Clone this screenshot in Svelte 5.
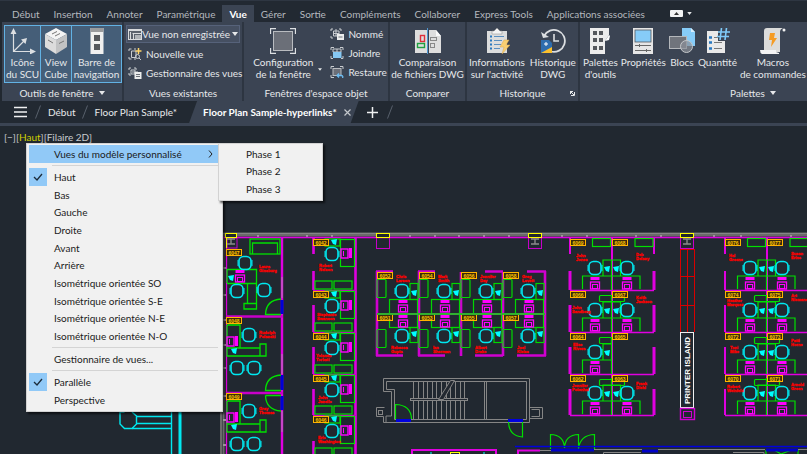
<script lang="ts">
  // Ruban "Vue", onglets de fichiers et zone de dessin avec le menu des vues.
  const tabs = [
    "Début", "Insertion", "Annoter", "Paramétrique", "Vue", "Gérer", "Sortie",
    "Compléments", "Collaborer", "Express Tools", "Applications associées",
  ];
  const views = [
    "Haut", "Bas", "Gauche", "Droite", "Avant", "Arrière",
    "Isométrique orientée SO", "Isométrique orientée S-E",
    "Isométrique orientée N-E", "Isométrique orientée N-O",
  ];
  const phases = ["Phase 1", "Phase 2", "Phase 3"];

  let activeTab = $state("Vue");
  let view = $state("Haut");
  let projection = $state("Parallèle");

  // Plan: bureaux fermés à gauche
  const offices = [
    { y: 317, no: "6048", name: ["Rudolph", "Polanski"] },
    { y: 393, no: "6049", name: ["Gray", "Thomas"] },
  ];
  const booths = [
    { y: 238, b: 290, no: "6042", name: ["Robert", "Nelson"], nx: 319, ny: 267 },
    { y: 290, b: 332, no: "6043", name: ["Stephanie", "Swanson"], nx: 317, ny: 316 },
    { y: 332, b: 374, no: "6044", name: ["Yolanda", "Torbati"], nx: 316, ny: 357 },
    { y: 374, b: 415, no: "6045", name: ["John", "Janello"], nx: 318, ny: 399 },
    { y: 415, b: 457, no: "6046", name: ["Eric", "Washington"], nx: 318, ny: 439 },
  ];
  // Îlot central: une colonne par poste, rangée haute et basse
  const pods = [
    { x: 377, a: "6052", b: "6051", top: ["Chris", "Larson"], bot: ["Rebecca", "Gupta"] },
    { x: 419, a: "6054", b: "6053", top: ["Mark", "Smith"], bot: ["Ian", "Sherman"] },
    { x: 461, a: "6056", b: "6055", top: ["Jennifer", "Day"], bot: ["Albert", "Drake"] },
    { x: 503, a: "6058", b: "6057", top: ["Greg", "Lovett"], bot: ["Joel", "Kleiss"] },
  ];
  const blocks = [
    {
      x: 570,
      w: 3,
      rows: [
        { y: 238, b: 290, nos: ["6069", "6068"], l: ["John", "Jones"], r: ["Deb", "Delany"], ly: 257, ry: 256, lx: 6 },
        { y: 290, b: 332, nos: ["6066", "6067"], l: ["John", "Sandberg"], r: ["Keith", "Jackson"], ly: 309, ry: 299, lx: 2 },
        { y: 332, b: 374, nos: ["6064", "6065"], l: ["Elise", "Rivera"], r: [], ly: 346, ry: 346, lx: 3 },
        { y: 374, b: 415, nos: ["6062", "6063"], l: ["Jennifer", "Potenhal"], r: ["Frank", "Diehl"], ly: 387, ry: 385, lx: 2 },
      ],
    },
    {
      x: 725,
      w: 2,
      rows: [
        { y: 238, b: 290, nos: ["6076", "6077"], l: ["Hal", "Greene"], r: ["Susan", "Erins"], ly: 257, ry: 255, lx: 4 },
        { y: 290, b: 332, nos: ["6074", "6075"], l: ["Heather", "Marquez"], r: ["Art", "Niemand"], ly: 302, ry: 297, lx: 2 },
        { y: 332, b: 374, nos: ["6072", "6073"], l: ["Toni", "Mike"], r: ["Patti", "Horne"], ly: 349, ry: 342, lx: 5 },
        { y: 374, b: 415, nos: ["6070", "6071"], l: ["Robert", "Weinfeld"], r: ["Arnold", "Green"], ly: 388, ry: 386, lx: 2 },
      ],
    },
  ];
  const stairs = [413, 418, 423, 427, 432, 436, 441, 446, 450, 455, 460, 464];
  const mullions = [257, 306, 331, 409, 434, 458, 483, 508, 561, 586, 635, 660, 713, 740, 790];
</script>

{#snippet arrow()}
  <svg class="arrow" viewBox="0 0 6 4" aria-hidden="true"><path d="M0 0H6L3 4Z" fill="currentColor" /></svg>
{/snippet}

{#snippet tick()}
  <svg class="tick" viewBox="0 0 10 8" aria-hidden="true"><path d="M1 4L4 7L9 1" fill="none" stroke="#1c2b3a" stroke-width="1.3" /></svg>
{/snippet}

<div class="app">
  <nav class="tabs">
    {#each tabs as t}
      <button class="tab" class:active={t === activeTab} onclick={() => (activeTab = t)}>{t}</button>
    {/each}
    <button class="minimize" aria-label="Réduire le ruban">
      <svg width="13" height="7" viewBox="0 0 13 7"><rect width="13" height="7" rx="1" fill="#f2f3f4" /><path d="M4 5L6.500 2L9 5Z" fill="#333" /></svg>
      <svg width="5" height="3" viewBox="0 0 6 4"><path d="M0 0H6L3 4Z" fill="#e6e8ea" /></svg>
    </button>
  </nav>

  <div class="ribbon">
    <section class="panel tools">
      <div class="body toggles">
        <button class="big on">
          <svg class="icon" viewBox="0 0 26 26"><g stroke="#dcdfe2" stroke-width="1.2" fill="none"><path d="M3.500 4V23.500H22M3.500 23.500L14 13" /></g><path d="M3.500 0L6.500 6H0.500ZM26 23.500L20 20.500V26.500ZM17 10L15.500 16L11 11.500Z" fill="#dcdfe2" /></svg>
          <span>Icône<br />du SCU</span>
        </button>
        <button class="big on">
          <svg class="icon" viewBox="0 0 26 26"><path d="M13 0L24 6L13 12L2 6Z" fill="#f4f4f4" /><path d="M2 6L13 12V26L2 19Z" fill="#dcdcdc" /><path d="M24 6L13 12V26L24 19Z" fill="#c2c3c4" /><path d="M9 6L14 3.500M12 8L17 5.500M5 12L10 15M16 15.500L21 13" stroke="#777" stroke-width="1" /></svg>
          <span>View<br />Cube</span>
        </button>
        <button class="big on">
          <svg class="icon" viewBox="0 0 26 26"><rect x="6.500" width="13" height="26" fill="#f0f0ef" /><rect x="6.500" width="13" height="4" fill="#9a9b9d" /><rect x="10" y="7" width="6" height="6" fill="#55585c" /><rect x="10" y="16" width="6" height="6" fill="#55585c" /></svg>
          <span>Barre de<br />navigation</span>
        </button>
      </div>
      <h2>Outils de fenêtre {@render arrow()}</h2>
    </section>

    <section class="panel views">
      <div class="body rows">
        <label class="combo">
          <svg class="small" viewBox="0 0 14 12"><rect x="0.500" y="1.500" width="13" height="10" fill="#5a616b" stroke="#d8dadc" /><rect x="1" y="1" width="12" height="2" fill="#d8dadc" /><path d="M2.500 4V11M4.500 5.500H13M5.500 5.500V11" stroke="#d8dadc" /><rect x="7" y="7" width="6" height="4" fill="#aeb2b6" /></svg>
          <select aria-label="Vue"><option>Vue non enregistrée</option></select>
          {@render arrow()}
        </label>
        <button class="row">
          <svg class="small" viewBox="0 0 14 12"><path d="M3.500 1H1V3M1 9V11H3.500M8 1H6M8 11H6M3.500 3V9.500H8V3H3.500" fill="none" stroke="#c9ccd0" /><circle cx="9.500" cy="8.500" r="2" fill="none" stroke="#c9ccd0" /><path d="M11 10L13 12" stroke="#c9ccd0" /><path d="M10.500 0V6M7.500 3H13.500" stroke="#ffd56a" stroke-width="1.5" /></svg>
          Nouvelle vue
        </button>
        <button class="row">
          <svg class="small" viewBox="0 0 14 12"><path d="M3 1H1V3M6 1H8V3M1 6V8H3M3 3H7V7H3ZM4 5H10V8" fill="none" stroke="#c9ccd0" /><rect x="6.500" y="5" width="7" height="7" fill="#eceded" /><path d="M8 7.500H12M8 9.500H12" stroke="#6b7078" /></svg>
          Gestionnaire des vues
        </button>
      </div>
      <h2>Vues existantes</h2>
    </section>

    <section class="panel ports">
      <div class="body split">
        <button class="big">
          <svg class="icon" viewBox="0 0 26 26"><rect x="3.500" y="3.500" width="19" height="19" fill="#6b6f78" stroke="#b9bcc0" /><path d="M6 0.500H0.500V6M20 0.500H25.500V6M0.500 20V25.500H6M25.500 20V25.500H20" fill="none" stroke="#dcdfe2" stroke-width="1.300" /></svg>
          <span>Configuration<br />de la fenêtre</span>
        </button>
        <svg class="drop" viewBox="0 0 6 4"><path d="M0 0H6L3 4Z" fill="#e6e8ea" /></svg>
        <div class="rows">
          <button class="row">
            <svg class="small" viewBox="0 0 14 12"><path d="M3 1H1V3M9 1H11V3M1 8V10H3M3.500 3H9V8H3.500ZM6 1V8M3 5.500H9" fill="none" stroke="#c9ccd0" /><rect x="7" y="6" width="7" height="6" fill="#eceded" /><path d="M8.500 9H12.500" stroke="#6b7078" /></svg>
            Nommé
          </button>
          <button class="row">
            <svg class="small" viewBox="0 0 14 12"><path d="M4 0.500H1V3M10 0.500H13V3M1 9V11.500H3M13 9V11.500H11" fill="none" stroke="#c9ccd0" /><path d="M3 2H11V5H3ZM7 2V5" fill="none" stroke="#c9ccd0" /><rect x="3" y="5" width="8.500" height="6" fill="#86c8f4" /></svg>
            Joindre
          </button>
          <button class="row">
            <svg class="small" viewBox="0 0 14 12"><path d="M4 0.500H1V3M10 0.500H13V3M1 9V11.500H4" fill="none" stroke="#c9ccd0" /><rect x="3" y="2.500" width="8" height="7" fill="#6b6f78" stroke="#b9bcc0" /><path d="M7 9.500H11.500Q13.500 10 12.500 12M9 7.500L7 9.500L9 11.500" fill="none" stroke="#6dbdf2" stroke-width="1.300" /></svg>
            Restaure
          </button>
        </div>
      </div>
      <h2>Fenêtres d'espace objet</h2>
    </section>

    <section class="panel compare">
      <div class="body centered">
        <button class="big">
          <svg class="icon" viewBox="0 0 26 26"><path d="M0 2H12V25H0ZM14 2H21L26 8V25H14Z" fill="#dedede" /><path d="M21 2V8H26Z" fill="#fafafa" /><path d="M12.500 0V26" stroke="#4f97d0" /><rect x="5.500" y="7.500" width="4" height="6" fill="none" stroke="#e0303c" stroke-width="1.400" /><rect x="2.500" y="15.500" width="7" height="4" fill="none" stroke="#20a040" stroke-width="1.400" /><rect x="15.500" y="9.500" width="6" height="3" fill="none" stroke="#888" /><rect x="15.500" y="15.500" width="4" height="4" fill="none" stroke="#888" /></svg>
          <span>Comparaison<br />de fichiers DWG</span>
        </button>
      </div>
      <h2>Comparer</h2>
    </section>

    <section class="panel history">
      <div class="body split">
        <button class="big">
          <svg class="icon" viewBox="0 0 26 26"><rect x="3" y="3" width="20" height="22" fill="#dcdddd" /><path d="M8 3H10L13 0L16 3H18V6H8Z" fill="#f4f4f4" stroke="#888" stroke-width="0.500" /><path d="M6 8.500H8M6 12.500H8M6 16.500H8M6 20.500H8" stroke="#2878c0" stroke-width="2" /><path d="M10 8.500H20M10 12.500H18M10 16.500H17M10 20.500H16" stroke="#5a8fc0" /><path d="M20 12L16 19H20L18 26L26 17H22L25 12Z" fill="#f8cf72" stroke="#dca94a" stroke-width="0.500" /></svg>
          <span>Informations<br />sur l'activité</span>
        </button>
        <button class="big">
          <svg class="icon" viewBox="0 0 26 26"><path d="M4 8A11 11 0 1 1 11 23.500" fill="none" stroke="#dcdfe2" stroke-width="1.800" /><path d="M1 4L3 10L9 9Z" fill="#dcdfe2" /><path d="M14 6V13H19" fill="none" stroke="#dcdfe2" stroke-width="1.600" /><path d="M1 12H9L12 15V25H1Z" fill="#2e6dae" /><path d="M1 25L12 19V25Z" fill="#fbc02d" /><path d="M4 16H8M6 14V18" stroke="#fff" /></svg>
          <span>Historique<br />DWG</span>
        </button>
      </div>
      <h2>Historique</h2>
      <button class="launcher" aria-label="Options d'historique">
        <svg width="5" height="5" viewBox="0 0 5 5"><path d="M0 0.500H3M0.500 0V3M1 1L4 4M4.500 1V4.500H1" fill="none" stroke="#e6e8ea" /></svg>
      </button>
    </section>

    <section class="panel palettes">
      <div class="body palette-list">
        <button class="big">
          <svg class="icon" viewBox="0 0 26 26"><path d="M3 0H22V7L18 13V26H3Z" fill="#ececec" /><path d="M22 7L18 13L22 12L23 8Z" fill="#fff" /><path d="M6 3H10V7H6ZM12 3H16V7H12ZM6 10H10V14H6ZM12 10H16V14H12ZM6 18H10V22H6ZM12 18H16V22H12Z" fill="#54575c" /></svg>
          <span>Palettes<br />d'outils</span>
        </button>
        <button class="big">
          <svg class="icon" viewBox="0 0 26 26"><rect x="3" width="20" height="26" fill="#e6e6e6" /><rect x="5" y="2" width="16" height="12" fill="#86ccf8" stroke="#555a60" stroke-width="0.800" /><path d="M5 17.500H21M5 22.500H21M9.500 16V19M16.500 21V24" stroke="#666" /></svg>
          <span>Propriétés</span>
        </button>
        <button class="big">
          <svg class="icon" viewBox="0 0 26 26"><path d="M13 0H22L26 4V18H13Z" fill="#86ccf8" /><path d="M22 0V4H26Z" fill="#d8effd" /><rect x="0.500" y="8.500" width="17" height="12" fill="#70747c" stroke="#b4b7bb" /><circle cx="17.500" cy="18.500" r="6" fill="#8b9098" fill-opacity="0.700" stroke="#c4c7ca" /></svg>
          <span>Blocs</span>
        </button>
        <button class="big">
          <svg class="icon" viewBox="0 0 26 26"><path d="M3 3H21V25H3Z" fill="#e9e9e9" /><path d="M5 9.500H8M5 14.500H8M5 20.500H8" stroke="#2878c0" stroke-width="2.500" /><path d="M10 9.500H15M10 14.500H18M10 20.500H18" stroke="#777" /><path d="M14 0H26V13H14Z" fill="#3b4453" /><path d="M17.500 0L16 12M22.500 0L21 12M14 4H26M13 8.500H25" stroke="#7fcaf8" stroke-width="1.600" /></svg>
          <span>Quantité</span>
        </button>
        <button class="big">
          <svg class="icon" viewBox="0 0 26 26"><path d="M4 3Q4 0 7 0H23Q20 1 20 4V24H6V22H4Z" fill="#dcdcdb" /><path d="M0 22H16V24L19 25V26H2Q0 25 0 22Z" fill="#f3f3f3" /><circle cx="24" cy="2" r="1.500" fill="#f3f3f3" /><path d="M10 5H15L14 10H17L11 19L12 12H9Z" fill="#f59b23" /></svg>
          <span>Macros<br />de commandes</span>
        </button>
      </div>
      <h2>Palettes {@render arrow()}</h2>
    </section>
  </div>

  <div class="files">
    <button class="burger" aria-label="Menu des fichiers">
      <svg width="13" height="12" viewBox="0 0 13 12"><path d="M0 1.500H13M0 6H13M0 10.500H13" stroke="#f0f1f2" stroke-width="1.500" /></svg>
    </button>
    <svg class="slash" viewBox="0 0 6 14"><path d="M0.500 13.500L5.500 0.500" stroke="#59616d" /></svg>
    <button class="file">Début</button>
    <svg class="slash" viewBox="0 0 6 14"><path d="M0.500 13.500L5.500 0.500" stroke="#59616d" /></svg>
    <button class="file">Floor Plan Sample*</button>
    <div class="current">
      <button class="file">Floor Plan Sample-hyperlinks*</button>
      <button class="close" aria-label="Fermer">
        <svg width="7" height="7" viewBox="0 0 7 7"><path d="M0.500 0.500L6.500 6.500M6.500 0.500L0.500 6.500" stroke="#c4c8cd" stroke-width="1.200" /></svg>
      </button>
    </div>
    <button class="plus" aria-label="Nouveau dessin">
      <svg width="11" height="11" viewBox="0 0 11 11"><path d="M5.500 0V11M0 5.500H11" stroke="#f0f1f2" stroke-width="1.500" /></svg>
    </button>
    <svg class="slash" viewBox="0 0 6 14"><path d="M0.500 13.500L5.500 0.500" stroke="#59616d" /></svg>
  </div>

  <main class="canvas">
    <svg class="plan" viewBox="0 126 807 328" preserveAspectRatio="xMinYMin slice" role="img" aria-label="Plan d'étage">
      {#snippet chair(x: number, y: number)}
        <rect x={x - 6} y={y - 6.5} width="12" height="13" rx="4.5" fill="none" stroke="#00e8f0" stroke-width="1.6" />
        <path d={`M${x - 7} ${y - 3}V${y + 3}M${x + 7} ${y - 3}V${y + 3}`} stroke="#00e8f0" />
      {/snippet}
      {#snippet pc(x: number, y: number)}
        <rect x={x - 4.5} y={y - 1} width="9" height="7" fill="none" stroke="#ff00ff" stroke-width="1.3" />
        <rect x={x - 2.5} y={y + 1.5} width="5" height="4" fill="none" stroke="#ff00ff" />
        <rect x={x - 4.5} y={y - 6} width="9" height="3" fill="#ff00ff" />
      {/snippet}
      {#snippet pcSide(x: number, y: number)}
        <rect x={x - 6} y={y - 4} width="7" height="9" fill="none" stroke="#ff00ff" stroke-width="1.4" />
        <rect x={x + 2} y={y - 5} width="3" height="10" fill="#ff00ff" />
        <path d={`M${x - 3.5} ${y - 2}V${y + 3}`} stroke="#ff00ff" />
      {/snippet}
      {#snippet phone(x: number, y: number)}
        <path d={`M${x - 3} ${y - 2}L${x + 3} ${y - 3}L${x + 2} ${y + 3}L${x - 1} ${y + 2}Z`} fill="#00ffff" />
      {/snippet}
      {#snippet badge(x: number, y: number, no: string)}
        <rect x={x + 0.5} y={y + 0.5} width="15" height="6" fill="#3a2c08" stroke="#ffb400" />
        <text class="no" x={x + 8} y={y + 5.5} text-anchor="middle">{no}</text>
      {/snippet}
      {#snippet who(x: number, y: number, name: string[])}
        {#each name as part, i}
          <text class="who" {x} y={y + i * 4}>{part}</text>
        {/each}
      {/snippet}
      {#snippet column(x: number)}
        <rect x={x + 0.5} y="237.5" width="13" height="11" fill="none" stroke="#c800c8" />
        <rect x={x + 0.5} y="233.5" width="13" height="4" fill="#20262e" stroke="#ffff00" />
      {/snippet}
      {#snippet beam(x: number)}
        <path d={`M${x - 4} 239H${x + 4}M${x} 239V244M${x - 4} 244H${x + 4}`} stroke="#8a8a8a" stroke-width="1.4" />
      {/snippet}

      <!-- façade -->
      <path d="M223 234.5H807" stroke="#6a6a6a" stroke-width="4" />
      <path d="M223 233.5H807" stroke="#858585" stroke-width="1" />
      <path d="M223.500 236V454M221 412V454" stroke="#6a6a6a" stroke-width="2" />
      {#each mullions as x}<rect {x} y="235" width="2" height="3" fill="#999" />{/each}
      {#each [267, 294, 319, 344, 367, 395, 419, 444] as y}<rect x="223" {y} width="3" height="2" fill="#999" />{/each}
      <path d="M223 237.500H807M226.500 237V454" stroke="#e000e0" stroke-width="1.300" />

      <!-- bureaux -->
      <path d="M282 237V454" stroke="#e000e0" stroke-width="2.400" />
      <path d="M282 277V298M282 354V374M282 411V432" stroke="#b088b0" />
      <path d="M226 316.500H283M226 393H283" stroke="#c800c8" stroke-width="2.600" />
      <path d="M282 300V314M282 375V390M282 396V410" stroke="#0000d8" stroke-width="3" />
      <g fill="none" stroke="#00e000" stroke-width="1.300">
        <rect x="250" y="239" width="30" height="15" /><path d="M252.500 254V243H277.500V254" />
        <path d="M227 269.500H256.500V309H244V303.500H256M227 283.500H256M247.500 283V303M227 269V283" />
        <path d="M281 299Q266 300 265.500 314.500H281M281 375Q266 376 265.500 390.500H281M265.500 395.500H281M265.500 395.500Q266 410 281 411" />
      </g>
      <rect x="227" y="238" width="10" height="10" fill="none" stroke="#c800c8" />
      <rect x="225.500" y="233.500" width="11" height="4" fill="#20262e" stroke="#ffff00" />
      <path d="M226.500 238V248" stroke="#ffff00" />
      {@render beam(231)}
      {@render badge(226, 249, "6047")}
      {@render chair(245, 263)}{@render chair(237, 291)}{@render chair(264, 290)}
      {@render pc(240, 276)}{@render phone(231, 278)}
      {@render who(259, 268, ["Laura", "Ginsburg"])}
      {#each offices as o}
        {@render badge(226, o.y, o.no)}
        <path d={`M227 ${o.y + 8}H240V${o.y + 31}M227 ${o.y + 8}V${o.y + 39}H266V${o.y + 27}H260V${o.y + 39}M227 ${o.y + 31}H260`} fill="none" stroke="#00e000" stroke-width="1.300" />
        {@render pcSide(233, o.y + 24)}{@render phone(234, o.y + 34)}
        {@render chair(249, o.y + 18)}{@render chair(237, o.y + 51)}{@render chair(254, o.y + 51)}
        {@render who(259, o.y + 17, o.name)}
      {/each}

      <!-- postes le long du couloir -->
      <path d="M355.500 237V454" stroke="#e000e0" stroke-width="2.600" />
      <path d="M313.500 238V254M313.500 271V290M313.500 305V332M313.500 347V374M313.500 389V415M313.500 441V454" stroke="#e000e0" stroke-width="2.600" />
      {#each booths as c}
        <path d={`M313 ${c.b}.5H356`} stroke="#c800c8" stroke-width="1.500" />
        <g fill="none" stroke="#00e000" stroke-width="1.200">
          <rect x="325" y={c.y + 1} width="15" height="7" />
          <rect x="340.500" y={c.y + 1.5} width="14" height="27" />
          <rect x="315" y={c.b - 9} width="17" height="8" />
          <rect x="334" y={c.b - 9} width="18" height="8" />
        </g>
        {@render badge(313, c.y + 1, c.no)}
        {@render phone(334, c.y + 4)}{@render chair(332, c.y + 16)}{@render pcSide(347, c.y + 15)}
        {@render who(c.nx, c.ny, c.name)}
      {/each}

      <!-- îlot central -->
      {@render column(376)}{@render column(528)}{@render beam(535)}
      <g stroke="#d000d0" stroke-width="2.600">
        <path d="M377 271V356M419 271V356M461 272V356M503 272V356M545 271V356" />
        <path d="M376 271.500H393M418 271.500H435M485 271.500H503M527 271.500H546M376 355.500H403M418 355.500H445M475 355.500H503M517 355.500H546" />
      </g>
      {#each pods as p}
        <g fill="none" stroke="#00d800" stroke-width="1.200">
          <rect x={p.x} y="279.500" width="9" height="18" rx="1" />
          <rect x={p.x} y="329.500" width="9" height="18" rx="1" />
          <rect x={p.x + 33} y="283.500" width="8" height="16" />
          <rect x={p.x + 33} y="327.500" width="8" height="15" />
          <rect x={p.x + 12.500} y="299.500" width="28" height="28" />
        </g>
        {@render badge(p.x, 272, p.a)}{@render badge(p.x, 314, p.b)}
        {@render chair(p.x + 25, 291)}{@render chair(p.x + 25, 336)}
        {@render phone(p.x + 37, 293)}{@render phone(p.x + 37, 334)}
        {@render pc(p.x + 26, 306)}{@render pc(p.x + 26, 321)}
        {@render who(p.x + 19, 278, p.top)}{@render who(p.x + 14, 349, p.bot)}
      {/each}
      <path d="M377 314H545" stroke="#30b030" stroke-width="2.200" />

      <!-- blocs de droite -->
      {#each blocks as k}
        {#each k.rows as r, i}
          <path d={`M${k.x} ${r.b}.500H${k.x + 84}`} stroke="#e000e0" stroke-width="1.600" />
          <path d={`M${k.x} ${r.b}V${i ? r.y + 15 : 271}M${k.x + 84} ${r.b}V${i ? r.y + 15 : 271}`} stroke="#e000e0" stroke-width={k.w} />
          {#if i === 0}<path d={`M${k.x} 238V254M${k.x + 84} 238V254`} stroke="#e000e0" stroke-width="2" />{/if}
          <path d={`M${k.x + 42} ${r.y}V${r.b}`} stroke="#e000e0" stroke-width="2" />
          <g fill="none" stroke="#00e000" stroke-width="1.200">
            <path d={`M${k.x + 33} ${r.b - 14}V${r.b - 30}H${k.x + 42}M${k.x + 12.500} ${r.b - 1}V${r.b - 14}H${k.x + 42}`} />
            <path d={`M${k.x + 41.500} ${r.b - 52 + (i ? 15 : 22)}V${r.b}`} />
            {#if r.r.length}
              <path d={`M${k.x + 42} ${r.b - 30}H${k.x + 50.500}V${r.b - 14}M${k.x + 42} ${r.b - 14}H${k.x + 70}V${r.b - 1}`} />
            {/if}
            {#if i === 0}
              <rect x={k.x + 22.500} y="238.500" width="18" height="8" />
              <rect x={k.x + 65} y="238.500" width="18" height="8" />
            {:else}
              <rect x={k.x + 29.500} y={r.y + 5.500} width={r.r.length ? 25 : 12} height="6" rx="1" />
            {/if}
          </g>
          {@render badge(k.x, r.y + 1, r.nos[0])}{@render badge(k.x + 42, r.y + 1, r.nos[1])}
          {@render chair(k.x + 25, r.b - 22)}{@render phone(k.x + 37, r.b - 21)}{@render pc(k.x + 25, r.b - 7)}
          {#if r.r.length}
            {@render chair(k.x + 57, r.b - 22)}{@render phone(k.x + 46, r.b - 21)}{@render pc(k.x + 57, r.b - 7)}
          {/if}
          {@render who(k.x + r.lx, r.ly, r.l)}{@render who(k.x + 66, r.ry, r.r)}
        {/each}
      {/each}

      <!-- îlot d'impression -->
      {@render column(680)}{@render beam(687)}
      <path d="M680.500 249V332M687.500 249V332M694.500 249V332M680 249.500H695M680 276.500H695M680 305.500H695" fill="none" stroke="#d80000" />
      <rect x="680.500" y="332.500" width="13" height="75" fill="none" stroke="#f0f0f0" />
      <text class="printer" transform="translate(690 404) rotate(-90)">PRINTER ISLAND</text>
      <rect x="680.500" y="408.500" width="14" height="11" fill="none" stroke="#d000d0" stroke-width="1.400" />
      <rect x="683.500" y="411.500" width="8" height="6" fill="none" stroke="#d000d0" />

      <!-- escalier -->
      <g fill="none" stroke="#858585" stroke-width="1">
        <path d="M383.500 378.500H529.500V422.500H383.500V416.500H376.500V407.500H384.500M383.500 378.500V391.500H391.500V416H386V422" />
        <path d="M386.500 381.500H526.500V419.500H394.500V389.500H386.500ZM484.500 381V419M486.500 381V419" />
        <rect x="378.500" y="410.500" width="4" height="4" />
        <path d="M529 407.500H542.500V418.500H529M531.500 409.500H539.500V416.500H531.500" />
        {#each stairs as x}<path d={`M${x}.5 382V399M${x}.5 401V419`} />{/each}
        <rect x="410.500" y="398.500" width="57" height="2" fill="#222830" />
        <path d="M438.500 399.500L450.500 380.500H454.500L443.500 399.500Z" fill="#222830" />
      </g>
      <path d="M396 420.500H411M508 420.500H523" stroke="#0000e0" stroke-width="3" />
      <g fill="none" stroke="#00e000" stroke-width="1.200">
        <path d="M395.500 419V404.500Q411 405 411.500 419" />
        <path d="M522.500 422V437Q509 436 508.500 422" />
        <path d="M550.500 449V434.500Q564 435 564.500 448Q565 435 578.500 434.500V449Q580 435 594.500 434.500V449" />
        <path d="M766 454V450.500H775L781 454L790 450.500H798V454" />
      </g>
      <path d="M515 446.500H807" stroke="#0000e0" stroke-width="1.400" />
      <path d="M551 450H594M642 451H658M766 450H798" stroke="#0000c8" stroke-width="3" />
      <path d="M412 454V450H496V454M518 454V450.500H540" fill="none" stroke="#e000e0" stroke-width="2" />
      <rect x="450.500" y="452.500" width="9" height="4" fill="none" stroke="#ffff00" />
      <path d="M431 452V454M484 452V454" stroke="#00ffff" />
      <path d="M540 450.500H551M594 449.500H642M658 449.500H765M603.500 454V452.500H641M733 452.500H764V454M798 449.500H807" fill="none" stroke="#858585" />

      <!-- mobilier à gauche -->
      <g fill="none" stroke="#00e8f0" stroke-width="1.400">
        <path d="M124.500 412H120V424L124.500 428.500H132L136.500 424V416L132 412" />
        <path d="M136 416.500H171M136 423.500H171M132 428.500H171M171.500 412V454" />
        <path d="M180 412V454" stroke-width="3" />
      </g>
    </svg>

    <div class="controls">
      <button>[−]</button><button class="hot">[<em>Haut</em>]</button><button>[Filaire 2D]</button>
    </div>

    <div class="menu" role="menu">
      <button class="item open" role="menuitem">
        <span></span>Vues du modèle personnalisé
        <svg class="chevron" viewBox="0 0 5 8"><path d="M1 0.500L4 4L1 7.500" fill="none" stroke="#222" /></svg>
      </button>
      <hr />
      <div class="list">
        {#each views as v}
          <button class="item" role="menuitemradio" aria-checked={v === view} onclick={() => (view = v)}>
            <span class:checked={v === view}>{#if v === view}{@render tick()}{/if}</span>{v}
          </button>
        {/each}
      </div>
      <hr />
      <button class="item" role="menuitem"><span></span>Gestionnaire de vues...</button>
      <hr />
      {#each ["Parallèle", "Perspective"] as p}
        <button class="item" role="menuitemradio" aria-checked={p === projection} onclick={() => (projection = p)}>
          <span class:checked={p === projection}>{#if p === projection}{@render tick()}{/if}</span>{p}
        </button>
      {/each}
    </div>

    <div class="menu sub" role="menu">
      <div class="list short">
        {#each phases as p}
          <button class="item" role="menuitem"><span></span>{p}</button>
        {/each}
      </div>
    </div>
  </main>
</div>

<style>
  :global(body) {
    background: #212830;
  }
  .app {
    font-family: Lato, "Open Sans", sans-serif;
    font-size: 10px;
    line-height: 12px;
    color: #e6e8ea;
    min-height: 100vh;
    display: flex;
    flex-direction: column;
    overflow: hidden;
  }
  button,
  select {
    font: inherit;
    color: inherit;
    background: none;
    border: 0;
    margin: 0;
    padding: 0;
    white-space: nowrap;
    text-align: left;
  }
  svg {
    display: block;
    flex: none;
  }
  .tabs {
    display: flex;
    height: 17px;
    padding: 4px 5px 0;
    border-top: 1px solid #2e3642;
    background: #222932;
  }
  .tab {
    padding: 0 7px;
    color: #b4b8be;
  }
  .tab.active {
    background: #3b4453;
    color: #fff;
    font-weight: bold;
  }
  .minimize {
    display: flex;
    align-items: center;
    gap: 4px;
    margin-left: 18px;
  }
  .ribbon {
    display: flex;
    height: 79px;
    margin-left: 2px;
    background: #3b4453;
    overflow: hidden;
  }
  .panel {
    position: relative;
    box-sizing: border-box;
    flex: none;
    display: flex;
    flex-direction: column;
    border-right: 2px solid #2d3541;
  }
  .tools { width: 122px; }
  .views { width: 120px; }
  .ports { width: 146px; }
  .compare { width: 77px; }
  .history { width: 113px; }
  .palettes { width: 348px; }
  .body {
    display: flex;
    height: 58px;
    padding: 3px 2px 0;
  }
  h2 {
    display: flex;
    align-items: center;
    justify-content: center;
    gap: 5px;
    margin: 4px 0 0;
    font-size: 10px;
    line-height: 12px;
    font-weight: normal;
  }
  .arrow {
    width: 6px;
    height: 4px;
  }
  .big {
    display: flex;
    flex-direction: column;
    align-items: center;
    gap: 2px;
    padding-top: 3px;
    text-align: center;
  }
  .icon {
    width: 26px;
    height: 26px;
  }
  .toggles {
    display: grid;
    grid-template-columns: 37px 31px 50px;
    height: 58px;
    padding-right: 0;
  }
  .on {
    padding-top: 2px;
    background: #455e78;
    border: 1px solid #62b2e4;
  }
  .on + .on {
    border-left-width: 0;
  }
  .rows {
    display: flex;
    flex-direction: column;
    gap: 3px;
  }
  .row {
    display: flex;
    align-items: center;
    gap: 4px;
    height: 16px;
  }
  .small {
    width: 14px;
    height: 12px;
  }
  .views .row {
    padding-left: 2px;
  }
  .combo {
    display: flex;
    align-items: center;
    height: 16px;
    padding: 0 1px;
    border: 1px solid #56627a;
    background: #465062;
  }
  .combo select {
    appearance: none;
    flex: 1;
    min-width: 0;
  }
  .split {
    justify-content: center;
    gap: 5px;
  }
  .ports .body {
    padding-left: 10px;
  }
  .drop {
    width: 4px;
    height: 3px;
    align-self: flex-end;
    margin-bottom: 12px;
  }
  .ports .rows {
    padding-left: 3px;
    padding-top: 1px;
  }
  .centered {
    justify-content: center;
  }
  .launcher {
    position: absolute;
    right: 3px;
    bottom: 5px;
  }
  .palette-list {
    gap: 3px;
    padding-left: 3px;
  }
  .files {
    display: flex;
    align-items: center;
    height: 22px;
    padding-left: 14px;
    background: #222932;
    border-bottom: 3px solid #3b4453;
  }
  .slash {
    width: 6px;
    height: 14px;
  }
  .burger {
    margin-right: 8px;
  }
  .slash + .file {
    margin: 0 6px 0 7px;
  }
  .current {
    display: flex;
    align-items: center;
    gap: 7px;
    height: 22px;
    margin-left: 6px;
    padding: 0 8px 0 14px;
    background: #3b4453;
    color: #fff;
    font-weight: bold;
    clip-path: polygon(8px 0, 100% 0, calc(100% - 8px) 100%, 0 100%);
  }
  .plus {
    margin: 0 9px 0 8px;
  }
  .canvas {
    position: relative;
    flex: 1;
    background: #212830;
  }
  .plan {
    width: 100%;
  }
  .no {
    font: bold 5px "Liberation Sans", sans-serif;
    fill: #ffc400;
  }
  .who {
    font: bold 4px "Liberation Sans", sans-serif;
    fill: #ff0000;
    stroke: #ff0000;
    stroke-width: 0.3px;
  }
  .printer {
    font: bold 8px "Liberation Sans", sans-serif;
    fill: #fff;
  }
  .controls {
    position: absolute;
    top: 5px;
    left: 4px;
    display: flex;
    color: #c8cbce;
  }
  .hot em {
    font-style: normal;
    color: #cfcf00;
  }
  .menu {
    position: absolute;
    top: 17px;
    left: 26px;
    z-index: 2;
    box-sizing: border-box;
    width: 197px;
    padding: 1px 2px 2px;
    background: #f1f1f1;
    border: 1px solid #d2d2d2;
    box-shadow: 2px 2px 2px #0009;
    color: #1a1a1a;
  }
  .sub {
    left: 218px;
    width: 105px;
    z-index: 3;
  }
  .item {
    display: flex;
    align-items: center;
    gap: 7px;
    width: 100%;
    height: 18px;
  }
  .item span {
    display: flex;
    align-items: center;
    justify-content: center;
    width: 18px;
    height: 100%;
  }
  .item .checked {
    background: #91c9f7;
  }
  .open {
    width: 189px;
    background: #91c9f7;
  }
  .chevron {
    width: 5px;
    height: 8px;
    margin-left: auto;
    margin-right: 5px;
  }
  .tick {
    width: 10px;
    height: 8px;
  }
  .list {
    display: grid;
    grid-template-rows: repeat(10, 1fr);
    height: 177px;
  }
  .short {
    grid-template-rows: repeat(3, 1fr);
    height: 53px;
  }
  .list .item {
    height: auto;
  }
  hr {
    height: 1px;
    margin: 2px 2px 2px 23px;
    border: 0;
    background: #d4d4d4;
  }
</style>
